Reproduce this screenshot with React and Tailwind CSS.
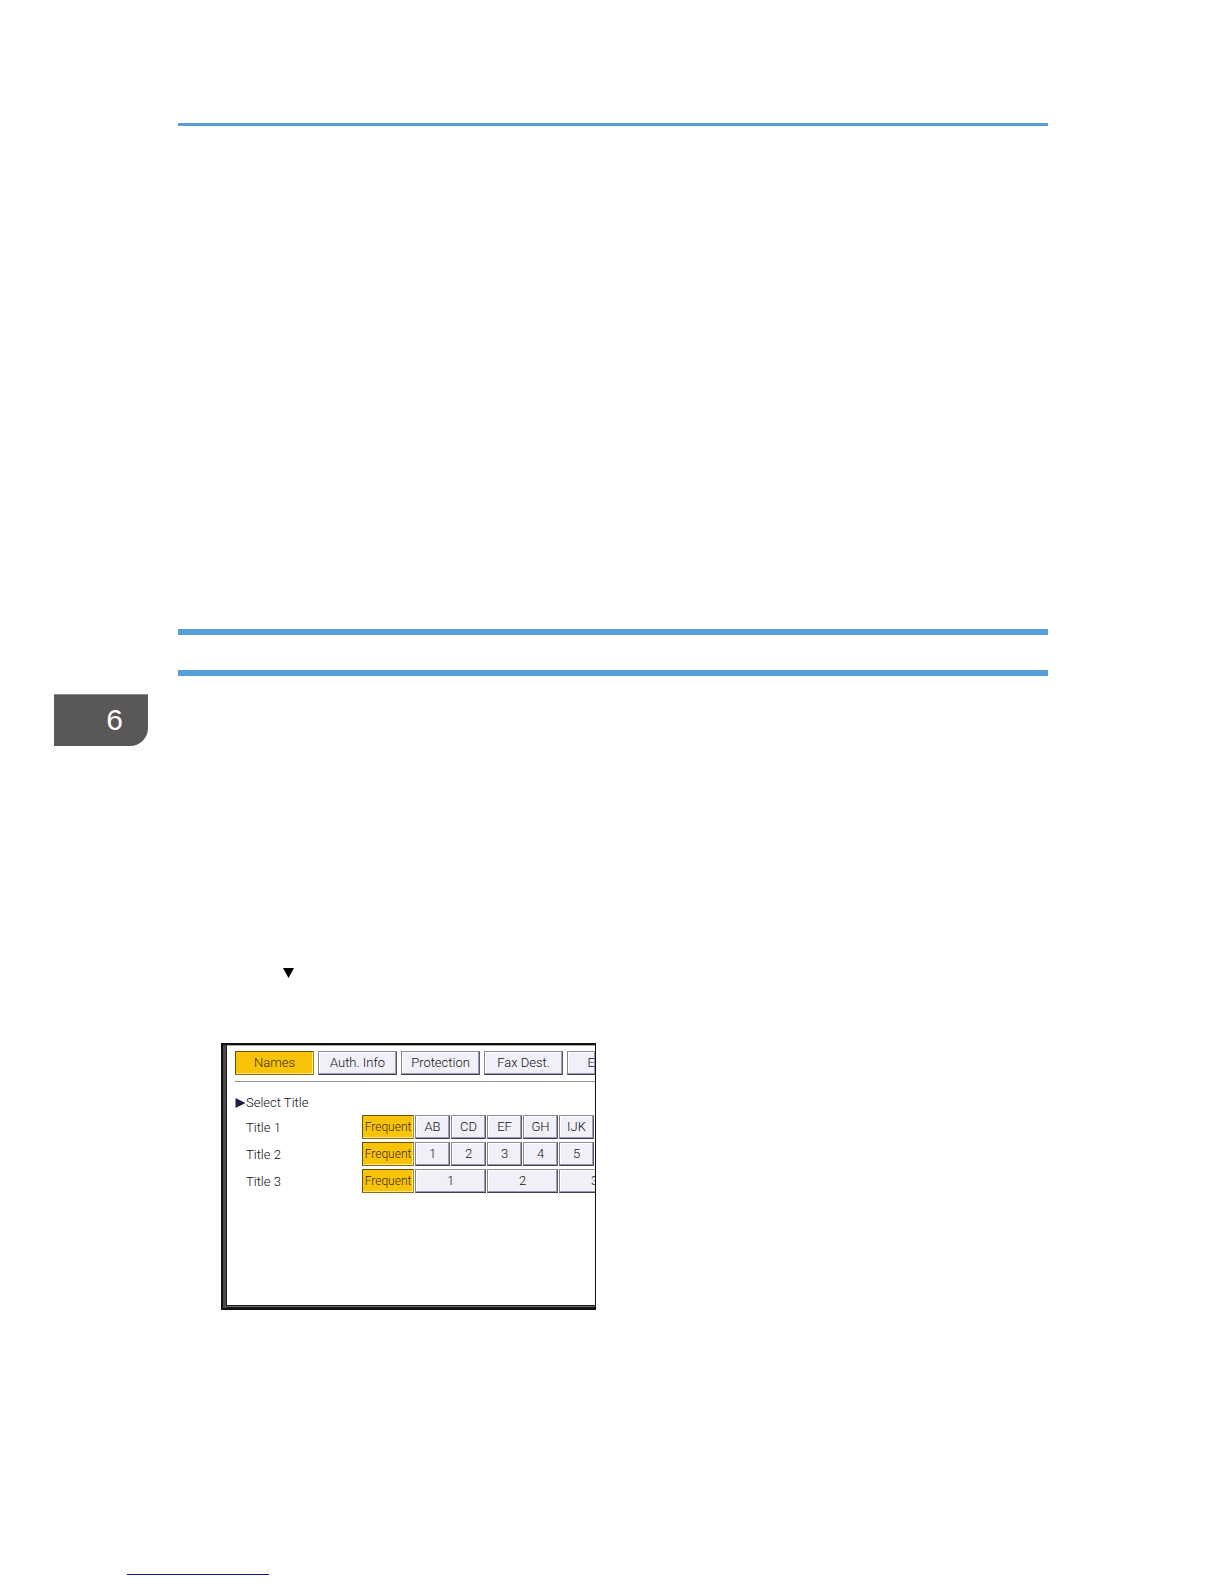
const keyBase =
  'flex shrink-0 h-6 items-center justify-center overflow-hidden whitespace-nowrap border leading-4';
const keyOn =
  'border-t-[#6b5200] border-l-[#6b5200] border-r-[#a58a2a] border-b-[#8a6d10] bg-[#f9c408] text-[#3a2c00] shadow-[inset_-1px_-1px_0_#ffe680]';
const keyOff =
  'border-t-[#8c8c94] border-l-[#85858f] border-r-[#5a5a70] border-b-[#3c3c52] bg-[#f1f0f9] text-[#101014] shadow-[inset_-1px_-1px_0_#9a9ab0,inset_1px_1px_0_#ffffff]';

function Key({ on, size, children }) {
  return (
    <button type="button" aria-pressed={!!on} className={`${keyBase} ${on ? keyOn : keyOff} ${size}`}>
      {children}
    </button>
  );
}

const tabs = ['Names', 'Auth. Info', 'Protection', 'Fax Dest.'];

const rows = [
  { title: 'Title 1', keys: ['AB', 'CD', 'EF', 'GH', 'IJK'], size: 'w-[35px] text-[13px]' },
  { title: 'Title 2', keys: ['1', '2', '3', '4', '5'], size: 'w-[35px] text-[13px]' },
  { title: 'Title 3', keys: ['1', '2', '3'], size: 'w-[71px] text-[13px]' },
];

function Panel() {
  return (
    <section
      aria-label="Address book"
      className="flex h-[267px] w-[375px] overflow-hidden border-t-2 border-r border-b-2 border-l-2 border-[#111111] bg-[#1c1c1c]"
    >
      <div className="w-[3px] shrink-0 bg-[#4a4a4a]" />
      <div className="flex min-w-0 flex-1 flex-col">
        <div className="ml-px flex-1 overflow-hidden border-t border-[#a8a8a8] bg-white pt-[5px] pl-2">
          <nav className="flex gap-1">
            {tabs.map((t, i) => (
              <Key key={t} on={i === 0} size="w-[79px] text-[13px]">{t}</Key>
            ))}
            <button type="button" className={`${keyBase} ${keyOff} min-w-0 flex-1 shrink justify-end border-r-0 text-[13px]`}>
              E
            </button>
          </nav>
          <hr className="mt-[6px] border-[#8f8f8f]" />
          <h2 className="mt-[13px] flex h-4 items-center text-[13px] leading-4 text-[#101014]">
            <svg className="h-3 w-[11px]" viewBox="0 0 11 12" aria-hidden="true">
              <path d="M0.5 1L10.5 6L0.5 11Z" fill="#201c48" />
            </svg>
            Select Title
          </h2>
          <div className="mt-1 flex flex-col gap-[3px]">
            {rows.map((r) => (
              <div key={r.title} className="flex gap-px">
                <div className="ml-[11px] flex w-[115px] shrink-0 items-center pt-0.5 text-[13px] leading-4 text-[#101014]">{r.title}</div>
                <Key on size="w-[52px] text-[12px]">Frequent</Key>
                {r.keys.map((k) => (
                  <Key key={k} size={r.size}>{k}</Key>
                ))}
              </div>
            ))}
          </div>
        </div>
        <div className="mt-px h-px bg-[#666666]" />
        <div className="h-px bg-[#1c1c1c]" />
      </div>
    </section>
  );
}

export default function App() {
  return (
    <main className="flex min-h-screen flex-col overflow-hidden bg-white font-['Roboto',sans-serif] font-light">
      <div className="mt-[123px] mr-[176px] ml-[178px] h-[3px] bg-[#5b9bd5]" />
      <div className="mt-[503px] mr-[176px] ml-[178px] h-[47px] border-y-[6px] border-[#549fda]" />
      <div className="mt-[18px] ml-[54px] flex h-[52px] w-[94px] items-center justify-end rounded-br-[18px] border-t border-[#8a8a8a] bg-[#595757] pr-[25px] pb-0.5 font-['Liberation_Sans',sans-serif] text-[30px] leading-8 font-normal text-white">
        6
      </div>
      <svg className="mt-[222px] ml-[283px] h-[10px] w-3" viewBox="0 0 12 10" aria-hidden="true">
        <path d="M0 0H11L5.5 10Z" fill="#000" />
      </svg>
      <div className="mt-[65px] ml-[221px]">
        <Panel />
      </div>
      <div className="mt-[264px] mb-2 ml-[127px] h-px w-[142px] bg-[#14148c]" />
    </main>
  );
}
